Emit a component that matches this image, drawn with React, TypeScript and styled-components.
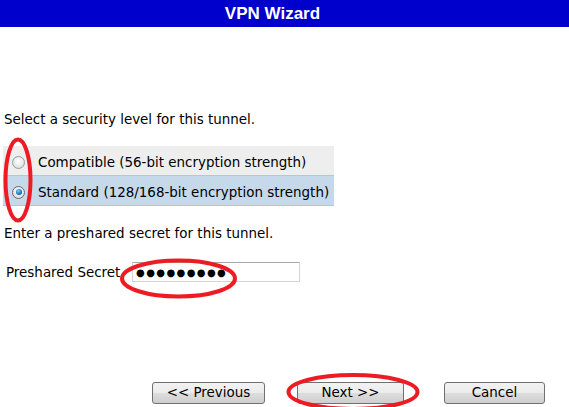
import React from "react";
import styled, { createGlobalStyle } from "styled-components";

const Global = createGlobalStyle`
  html, body { margin: 0; padding: 0; background: #fff; }
  body { font-family: Verdana, "DejaVu Sans", sans-serif; font-size: 13.45px; color: #000; }
  #root { position: relative; width: 569px; height: 407px; overflow: hidden; }
`;

const Page = styled.div`
  position: relative;
  width: 569px;
  height: 407px;
  display: flex;
  flex-direction: column;
`;

const Header = styled.div`
  height: 27px;
  background: #0000cc;
  color: #fff;
  font-family: "Liberation Sans", Arial, sans-serif;
  font-weight: bold;
  font-size: 17px;
  display: flex;
  align-items: center;
  justify-content: center;
  padding-right: 24px;
`;

const Content = styled.div`
  padding: 0 0 0 3px;
  display: flex;
  flex-direction: column;
`;

const Prompt = styled.div<{ $top: number }>`
  margin-top: ${(p) => p.$top}px;
  line-height: 16px;
  padding-left: 1px;
`;

const Options = styled.div`
  width: 331px;
  margin-top: 18px;
  display: flex;
  flex-direction: column;
`;

const OptionRow = styled.label<{ $selected?: boolean }>`
  height: 29px;
  box-sizing: border-box;
  padding-top: 3px;
  display: flex;
  align-items: center;
  background: ${(p) => (p.$selected ? "#c5d9ea" : "#eeeeee")};
  border-bottom: 1px solid #a9c9e8;
  white-space: nowrap;
  height: 30px;
`;

const Radio = styled.span<{ $checked?: boolean }>`
  width: 13px;
  height: 13px;
  margin: 0 13px 0 9px;
  box-sizing: border-box;
  border-radius: 50%;
  border: 1px solid ${(p) => (p.$checked ? "#6b6b6b" : "#9a9a9a")};
  background: radial-gradient(circle at 50% 40%, #ffffff 0%, #e6e6e6 60%, #cfcfcf 100%);
  display: flex;
  align-items: center;
  justify-content: center;
  &::after {
    content: "";
    display: ${(p) => (p.$checked ? "block" : "none")};
    width: 6px;
    height: 6px;
    border-radius: 50%;
    background: radial-gradient(circle at 40% 35%, #7fd0ff 0%, #1b78c4 55%, #0b3d73 100%);
  }
`;

const SecretRow = styled.div`
  margin-top: 20px;
  display: flex;
  align-items: center;
  padding-left: 3px;
`;

const Label = styled.span`
  width: 126px;
`;

const SecretInput = styled.div`
  width: 168px;
  height: 20px;
  box-sizing: border-box;
  border: 1px solid #d4d4d4;
  border-top-color: #a8a8a8;
  display: flex;
  align-items: center;
  padding-left: 3px;
  font-size: 10px;
  letter-spacing: 1.4px;
  color: #000;
`;

const ButtonBar = styled.div`
  margin-top: 100px;
  display: flex;
  padding-left: 149px;
`;

const Button = styled.button<{ $w: number; $gap: number }>`
  width: ${(p) => p.$w}px;
  height: 22px;
  margin-left: ${(p) => p.$gap}px;
  border: 1px solid #707070;
  border-radius: 3px;
  background: linear-gradient(#f2f2f2 0%, #ebebeb 50%, #dddddd 51%, #cfcfcf 100%);
  font-family: Verdana, "DejaVu Sans", sans-serif;
  font-size: 13.45px;
  color: #000;
  padding: 0;
  line-height: 20px;
`;

const Marks = styled.svg`
  position: absolute;
  left: 0;
  top: 0;
  pointer-events: none;
`;

export default function App() {
  return (
    <>
      <Global />
      <Page>
        <Header>VPN Wizard</Header>
        <Content>
          <Prompt $top={85}>Select a security level for this tunnel.</Prompt>
          <Options>
            <OptionRow>
              <Radio />
              Compatible (56-bit encryption strength)
            </OptionRow>
            <OptionRow $selected>
              <Radio $checked />
              Standard (128/168-bit encryption strength)
            </OptionRow>
          </Options>
          <Prompt $top={20}>Enter a preshared secret for this tunnel.</Prompt>
          <SecretRow>
            <Label>Preshared Secret</Label>
            <SecretInput>●●●●●●●●●</SecretInput>
          </SecretRow>
          <ButtonBar>
            <Button $w={113} $gap={0}>&lt;&lt; Previous</Button>
            <Button $w={107} $gap={32}>Next &gt;&gt;</Button>
            <Button $w={101} $gap={40}>Cancel</Button>
          </ButtonBar>
        </Content>
        <Marks width="569" height="407" viewBox="0 0 569 407">
          <ellipse cx="18" cy="180" rx="12.5" ry="40.5" fill="none" stroke="#ed1c24" strokeWidth="4" />
          <ellipse cx="178.5" cy="278.5" rx="56.5" ry="18" fill="none" stroke="#ed1c24" strokeWidth="4" />
          <ellipse cx="353" cy="392" rx="64.5" ry="17" fill="none" stroke="#ed1c24" strokeWidth="4" />
        </Marks>
      </Page>
    </>
  );
}
